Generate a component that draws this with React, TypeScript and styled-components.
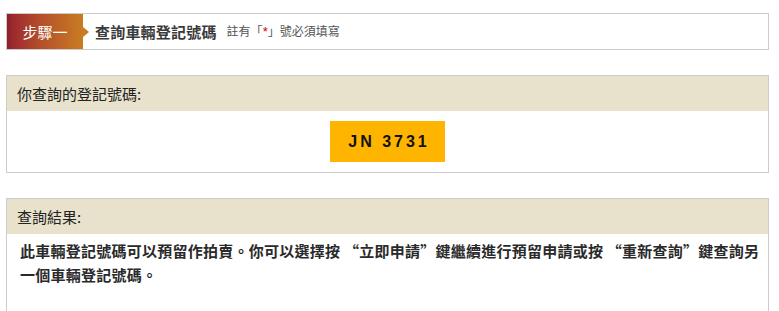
import React from "react";
import styled, { createGlobalStyle } from "styled-components";

const GlobalStyle = createGlobalStyle`
  html, body {
    margin: 0;
    padding: 0;
    background: #ffffff;
  }
  body {
    font-family: "Noto Sans CJK TC", "Liberation Sans", sans-serif;
    color: #333333;
  }
`;

const Page = styled.div`
  width: 763px;
  padding: 13px 0 0 6px;
  display: flex;
  flex-direction: column;
  gap: 25px;
`;

const StepBar = styled.div`
  display: flex;
  align-items: center;
  height: 35px;
  border: 1px solid #cccccc;
`;

const StepBadge = styled.div`
  width: 76px;
  height: 35px;
  display: flex;
  align-items: center;
  justify-content: center;
  background: linear-gradient(90deg, #8e1c30 0%, #9e2a2e 8%, #b4502a 45%, #c97c22 100%);
  color: #ffffff;
  font-size: 15px;
  line-height: 1;
`;

const StepArrow = styled.div`
  width: 0;
  height: 0;
  border-left: 6px solid #c97c22;
  border-top: 5px solid transparent;
  border-bottom: 5px solid transparent;
`;

const StepTitle = styled.h1`
  margin: 0 0 0 6px;
  font-size: 15px;
  font-weight: 700;
  letter-spacing: 0.2px;
  color: #3a3a3a;
  line-height: 1;
`;

const StepNote = styled.span`
  margin-left: 10px;
  font-size: 12px;
  color: #555555;
  line-height: 1;
`;

const Required = styled.span`
  color: #cc0000;
  font-family: "Liberation Sans", sans-serif;
  font-size: 13px;
`;

const Panel = styled.section`
  border: 1px solid #cccccc;
  display: flex;
  flex-direction: column;
`;

const PanelHeader = styled.div`
  height: 35px;
  display: flex;
  align-items: center;
  padding: 0 10px;
  background: #e8e2cc;
  font-size: 15px;
  color: #222222;
`;

const PlateBody = styled.div`
  height: 61px;
  display: flex;
  align-items: center;
  justify-content: center;
  background: #ffffff;
`;

const Plate = styled.div`
  width: 115px;
  height: 41px;
  display: flex;
  align-items: center;
  justify-content: center;
  background: #ffb400;
  font-family: "Liberation Sans", Arial, sans-serif;
  font-weight: 700;
  font-size: 16px;
  letter-spacing: 3px;
  color: #111111;
  padding-left: 3px;
  box-sizing: border-box;
`;

const ResultBody = styled.div`
  min-height: 78px;
  padding: 5px 5px 0 13px;
  background: #ffffff;
  font-size: 15px;
  font-weight: 700;
  letter-spacing: 0.25px;
  line-height: 24px;
  color: #2a2a2a;
`;

export default function App() {
  return (
    <>
      <GlobalStyle />
      <Page>
        <StepBar>
          <StepBadge>步驟一</StepBadge>
          <StepArrow />
          <StepTitle>查詢車輛登記號碼</StepTitle>
          <StepNote>
            註有「<Required>*</Required>」號必須填寫
          </StepNote>
        </StepBar>

        <Panel>
          <PanelHeader>你查詢的登記號碼:</PanelHeader>
          <PlateBody>
            <Plate>JN 3731</Plate>
          </PlateBody>
        </Panel>

        <Panel>
          <PanelHeader>查詢結果:</PanelHeader>
          <ResultBody>
            此車輛登記號碼可以預留作拍賣。你可以選擇按 “立即申請”鍵繼續進行預留申請或按 “重新查詢”鍵查詢另一個車輛登記號碼。
          </ResultBody>
        </Panel>
      </Page>
    </>
  );
}
